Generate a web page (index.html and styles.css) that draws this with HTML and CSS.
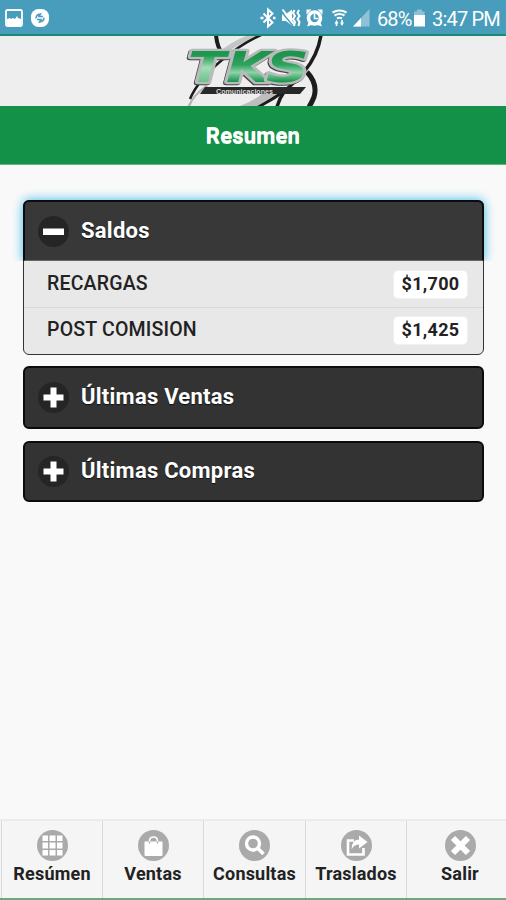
FILE: index.html
```html
<!DOCTYPE html>
<html lang="es">
<head>
    <meta charset="UTF-8">
    <meta name="viewport" content="width=device-width, initial-scale=1.0">
    <title>Resumen</title>
    <link rel="stylesheet" href="styles.css">
</head>
<body>
    <div class="status-bar">
        <div class="status-left">
            <svg width="18" height="18" viewBox="0 0 18 18">
                <rect x="1" y="1" width="16" height="16" rx="1.5" fill="none" stroke="#fff" stroke-width="1.8"/>
                <path d="M2 10l3-1 1 1 2-1 2 1 2-3 1 2 3 1v6H2z" fill="#fff"/>
            </svg>
            <svg width="18" height="18" viewBox="0 0 18 18">
                <rect width="18" height="18" rx="7.5" fill="#fff"/>
                <path d="M5 9.500q0-4 4.500-4.500L8 7.500h4M13 8.500q0 4-4.500 4.500l1.500-2.500H6" fill="none" stroke="#489dbd" stroke-width="1.500"/>
            </svg>
        </div>
        <div class="status-right">
            <svg width="112" height="22" viewBox="260 7 112 22">
                <!-- bluetooth -->
                <path d="M263.500 13.500l9 9-4.500 4V9.500l4.500 4-9 9" fill="none" stroke="#fff" stroke-width="2"/>
                <path d="M260.500 16.800h3v2.400h-3zM273 16.800h2.500v2.400H273z" fill="#fff"/>
                <!-- muted, vibrating -->
                <path d="M282 14h4l6-4.500v16L286 21h-4z" fill="#fff"/>
                <path d="M281 11.500l12 14" stroke="#489dbd" stroke-width="1.500"/>
                <path d="M282.500 9.500l12 15.500M294.500 10l-1.500 3 2 3-2 3 2 3-1 4M299 10l-1.500 3 2 3-2 3 2 3-1 4" fill="none" stroke="#fff" stroke-width="2"/>
                <!-- alarm -->
                <circle cx="314.500" cy="18" r="6" fill="none" stroke="#fff" stroke-width="3.600"/>
                <path d="M314.500 14v4.500h3.500" fill="none" stroke="#fff" stroke-width="1.600"/>
                <path d="M306.500 9.500h5l-5 5zM322.500 9.500h-5l5 5zM307 26.500l2-5 4 3zM322 26.500l-2-5-4 3z" fill="#fff"/>
                <!-- wifi -->
                <path d="M332.500 12.500q7-4 14 0M334.500 15.500q5-3 10 0M337 18.500q2.500-1.500 5 0" fill="none" stroke="#fff" stroke-width="2.200"/>
                <path d="M334.500 23.500l2-3.500 2 3.500h-1.200v2.500h-1.600v-2.500zM340 22.500h1.200v-2.500h1.600v2.500h1.200l-2 3.500z" fill="#fff"/>
                <!-- signal -->
                <path d="M353 26.500L369.500 9v17.500z" fill="#8fc2d6"/>
                <path d="M353 26.500l8-8.500v8.500z" fill="#fff"/>
            </svg>
            <span class="percent">68%</span>
            <svg width="12" height="22" viewBox="415 7 12 22">
                <path d="M418 9.500h5v2h2.500v5h-10.500v-5h3z" fill="#8fc2d6"/>
                <path d="M415 15h11v11.500h-11z" fill="#fff"/>
            </svg>
            <span class="clock">3:47 PM</span>
        </div>
    </div>

    <div class="logo-bar">
        <svg width="160" height="70" viewBox="176 36 160 70">
            <defs>
                <linearGradient id="green" x1="0" y1="0" x2="0" y2="1">
                    <stop offset="0.250" stop-color="#1e944e"/>
                    <stop offset="0.450" stop-color="#2fa45f"/>
                    <stop offset="0.600" stop-color="#8fd2a9"/>
                    <stop offset="0.800" stop-color="#129148"/>
                </linearGradient>
                <linearGradient id="greenT" x1="0" y1="0" x2="0" y2="1">
                    <stop offset="0.250" stop-color="#1d9850"/>
                    <stop offset="0.500" stop-color="#a3dcb8"/>
                    <stop offset="0.800" stop-color="#6fc08e"/>
                </linearGradient>
            </defs>
            <!-- orbit rings behind the letters -->
            <path d="M260 36h-14Q229 43 218 53h8Q240 43 260 36z" fill="#c5c5c5"/>
            <path d="M206 85Q193 94 187 107h3Q194 95 208 87z" fill="#b5b5b5"/>
            <path d="M261 35Q241 44 222 60Q198 80 190 99" fill="none" stroke="#1c1c1c" stroke-width="2.500"/>
            <path d="M216 35q1 12 7 20" fill="none" stroke="#1c1c1c" stroke-width="4"/>
            <path d="M321 35Q318 55 304 72Q287 93 257 107" fill="none" stroke="#1c1c1c" stroke-width="3.500"/>
            <path d="M280 92Q262 104 255 107h-18Q255 101 264 92z" fill="#bdbdbd"/>
            <path d="M307 72q11 12 7 25-2 5-5 10" fill="none" stroke="#1c1c1c" stroke-width="5"/>
            <path d="M284 92q-5 7-7 15" fill="none" stroke="#1c1c1c" stroke-width="3.500"/>
            <path d="M205 87h101l-6 7h-100z" fill="#282828"/>
            <g class="logo-letters">
                <text x="188" y="82" textLength="38" lengthAdjust="spacingAndGlyphs" fill="url(#greenT)">T</text>
                <text x="226" y="82" textLength="45" lengthAdjust="spacingAndGlyphs" fill="url(#green)">K</text>
                <text x="266" y="82" textLength="43" lengthAdjust="spacingAndGlyphs" fill="url(#green)">S</text>
            </g>
            <text class="logo-sub" x="216" y="93.500" textLength="57" lengthAdjust="spacingAndGlyphs">Comunicaciones</text>
        </svg>
    </div>

    <h1 class="title-bar">Resumen</h1>

    <div class="content">
        <div class="panel">
            <div class="panel-head active">
                <svg width="31" height="31" viewBox="0 0 31 31">
                    <circle cx="15.500" cy="15.500" r="15.500" fill="#252525"/>
                    <path d="M5 12.500h21v6.500H5z" fill="#fff"/>
                </svg>
                <span>Saldos</span>
            </div>
            <div class="row">
                <span>RECARGAS</span>
                <span class="badge">$1,700</span>
            </div>
            <div class="row">
                <span>POST COMISION</span>
                <span class="badge">$1,425</span>
            </div>
        </div>
        <div class="panel-head ventas">
            <svg width="31" height="31" viewBox="0 0 31 31">
                <circle cx="15.500" cy="15.500" r="15.500" fill="#252525"/>
                <path d="M12.500 5.500h6v7h7v6h-7v7h-6v-7h-7v-6h7z" fill="#fff"/>
            </svg>
            <span>Últimas Ventas</span>
        </div>
        <div class="panel-head compras">
            <svg width="31" height="31" viewBox="0 0 31 31">
                <circle cx="15.500" cy="15.500" r="15.500" fill="#252525"/>
                <path d="M12.500 5.500h6v7h7v6h-7v7h-6v-7h-7v-6h7z" fill="#fff"/>
            </svg>
            <span>Últimas Compras</span>
        </div>
    </div>

    <div class="navbar">
        <div class="nav-item">
            <svg width="31" height="31" viewBox="0 0 31 31">
                <circle cx="15.500" cy="15.500" r="15.500" fill="#aaa"/>
                <path d="M5.500 5.500h5.500v5.500H5.500zM12.500 5.500h6v5.500h-6zM20 5.500h5.500v5.500H20zM5.500 12.500h5.500v6H5.500zM12.500 12.500h6v6h-6zM20 12.500h5.500v6H20zM5.500 20h5.500v5.500H5.500zM12.500 20h6v5.500h-6zM20 20h5.500v5.500H20z" fill="#fff"/>
            </svg>
            <span>Resúmen</span>
        </div>
        <div class="nav-item">
            <svg width="31" height="31" viewBox="0 0 31 31">
                <circle cx="15.500" cy="15.500" r="15.500" fill="#aaa"/>
                <path d="M6.500 11.500h18V25a1 1 0 0 1-1 1h-16a1 1 0 0 1-1-1z" fill="#fff"/>
                <path d="M11.500 12V11q0-4 4-4t4 4v1" fill="none" stroke="#fff" stroke-width="1.600"/>
                <path d="M11.500 11.500v2M19.500 11.500v2" stroke="#aaa" stroke-width="1.400"/>
            </svg>
            <span>Ventas</span>
        </div>
        <div class="nav-item">
            <svg width="31" height="31" viewBox="0 0 31 31">
                <circle cx="15.500" cy="15.500" r="15.500" fill="#aaa"/>
                <circle cx="14" cy="13.500" r="6.500" fill="none" stroke="#fff" stroke-width="3.400"/>
                <path d="M18.500 18l6 6" stroke="#fff" stroke-width="3.600"/>
            </svg>
            <span>Consultas</span>
        </div>
        <div class="nav-item">
            <svg width="31" height="31" viewBox="0 0 31 31">
                <circle cx="15.500" cy="15.500" r="15.500" fill="#aaa"/>
                <path d="M13 10.500H7v14h15.500V18" fill="none" stroke="#fff" stroke-width="2.600"/>
                <path d="M18 5.500l8.500 6.500-8.500 6.500v-4q-5 0-7.500 5 0-9.500 7.500-10z" fill="#fff"/>
            </svg>
            <span>Traslados</span>
        </div>
        <div class="nav-item last">
            <svg width="31" height="31" viewBox="0 0 31 31">
                <circle cx="15.500" cy="15.500" r="15.500" fill="#aaa"/>
                <path d="M8 8l15 15M23 8L8 23" stroke="#fff" stroke-width="6"/>
            </svg>
            <span>Salir</span>
        </div>
    </div>
</body>
</html>
```
FILE: styles.css
```css
* {
    box-sizing: border-box;
}
body {
    margin: 0;
    height: 900px;
    display: flex;
    flex-direction: column;
    overflow: hidden;
    background: #f9f9f9;
    color: #222;
    font-family: Roboto, sans-serif;
}
.status-bar {
    height: 36px;
    flex: none;
    display: flex;
    justify-content: space-between;
    padding: 7px 6px 0 5px;
    background: #489dbd;
    border-bottom: 2px solid #188b71;
}
.status-left {
    display: flex;
    gap: 8px;
    padding-top: 2px;
}
.status-right {
    display: flex;
    color: #fff;
    font-size: 20px;
    line-height: 24px;
    white-space: nowrap;
}
.percent {
    width: 38px;
    padding-left: 5px;
    margin-right: 4px;
    letter-spacing: -0.9px;
}
.clock {
    width: 68px;
    margin-left: 6px;
    letter-spacing: -0.8px;
}
.logo-bar {
    height: 70px;
    flex: none;
    padding-left: 176px;
    background: #eee;
}
.logo-bar svg {
    display: block;
}
.logo-letters {
    font-family: "DejaVu Sans", sans-serif;
    font-weight: bold;
    font-style: italic;
    font-size: 42px;
    paint-order: stroke;
    stroke: #b9bbba;
    stroke-width: 4.5px;
    stroke-linejoin: round;
    filter: drop-shadow(-1px 1px 0 #444);
}
.logo-sub {
    font-family: "Liberation Sans", sans-serif;
    font-weight: bold;
    font-size: 7.5px;
    fill: #ddd;
}
.title-bar {
    height: 59px;
    flex: none;
    margin: 0;
    background: #139148;
    border-bottom: 1px solid #67b487;
    color: #fff;
    font-size: 22px;
    line-height: 59px;
    letter-spacing: 0.2px;
    text-align: center;
    text-shadow: 0 1px 0 #e5f3e9;
}
.content {
    flex: 1;
    padding: 35px 22px 0 23px;
}
.panel {
    height: 155px;
    margin-bottom: 11px;
    background: #e8e8e8;
    border: 1px solid #333;
    border-radius: 6px;
}
.panel-head {
    display: flex;
    align-items: center;
    padding-left: 13px;
    gap: 12px;
    background: #333;
    border: 2px solid #0c0c0c;
    border-radius: 6px;
    color: #fff;
    font-size: 22px;
    font-weight: 700;
    letter-spacing: 0.25px;
    text-shadow: 0 1px 1px #111;
}
.panel-head span {
    padding-bottom: 2px;
}
.panel-head.active {
    height: 61px;
    margin: -1px -1px 0;
    background: #383838;
    border-bottom: 1px solid #666;
    border-radius: 6px 6px 0 0;
    box-shadow: 0 0 11px #38b8ed;
    clip-path: inset(-14px -14px 0 -14px);
}
.ventas {
    height: 63px;
    margin-bottom: 12px;
}
.compras {
    height: 61px;
}
.row {
    height: 46px;
    display: flex;
    justify-content: space-between;
    align-items: flex-start;
    padding: 9px 15px 0 23px;
    font-size: 19.5px;
    font-weight: 500;
    line-height: 28px;
    letter-spacing: 0.2px;
    color: #222;
}
.row + .row {
    padding-top: 8px;
    border-top: 1px solid #d9d9d9;
}
.badge {
    width: 75px;
    height: 29px;
    background: #fff;
    border: 1px solid #f0f0f0;
    border-radius: 5px;
    text-align: center;
    font-size: 18px;
    font-weight: 700;
    line-height: 25px;
    letter-spacing: 0.3px;
}
.navbar {
    height: 81px;
    flex: none;
    display: grid;
    grid-template-columns: 101px 101px 102px 101px 1fr;
    padding-left: 1px;
    background: #f5f5f5;
    border-top: 2px solid #ebebeb;
    border-bottom: 2px solid #70a584;
}
.nav-item {
    display: flex;
    flex-direction: column;
    align-items: center;
    padding-top: 9px;
    border-left: 1px solid #d9d9d9;
    font-size: 18px;
    font-weight: 700;
    line-height: 25px;
    letter-spacing: 0.2px;
    color: #222;
}
.nav-item.last {
    padding-left: 7px;
}
```
